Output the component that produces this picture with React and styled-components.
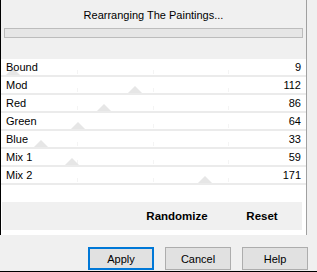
import React from 'react';
import styled, { createGlobalStyle } from 'styled-components';

const GlobalStyle = createGlobalStyle`
  html, body {
    margin: 0;
    padding: 0;
    background: #f0f0f0;
  }
  body {
    font-family: "Liberation Sans", Arial, sans-serif;
    font-size: 11px;
    color: #000;
  }
`;

const Window = styled.div`
  width: 317px;
  height: 272px;
  box-sizing: border-box;
  display: flex;
  flex-direction: column;
  background: #f0f0f0;
  border-bottom: 1px solid #000;
`;

const Panel = styled.div`
  width: 307px;
  height: 235px;
  flex: none;
  box-sizing: border-box;
  border-left: 1px solid #000;
  border-right: 1px solid #a0a0a0;
  background: #fff;
  display: flex;
  flex-direction: column;
`;

const Header = styled.div`
  height: 59px;
  box-sizing: border-box;
  padding: 8px 3px 0 3px;
  background: #f0f0f0;
  display: flex;
  flex-direction: column;
`;

const Title = styled.div`
  height: 14px;
  line-height: 14px;
  text-align: center;
  font-size: 11px;
`;

const Progress = styled.div`
  margin-top: 6px;
  height: 10px;
  box-sizing: border-box;
  border: 1px solid #bcbcbc;
  background: #e6e6e6;
`;

const Rows = styled.div`
  display: flex;
  flex-direction: column;
`;

const Row = styled.div`
  position: relative;
  height: 18px;
  box-sizing: border-box;
  border-bottom: 2px solid #ebebeb;
  padding: 0 5px 0 5px;
  display: flex;
  align-items: center;
  justify-content: space-between;
  background: #fff;
`;

const Label = styled.span`
  position: relative;
  z-index: 1;
  line-height: 14px;
`;

const Value = styled(Label)`
  text-align: right;
`;

// slider thumb, placed along the track from the value
const Thumb = styled.div`
  position: absolute;
  bottom: 0;
  width: 0;
  height: 0;
  border-left: 7px solid transparent;
  border-right: 7px solid transparent;
  border-bottom: 7px solid #e6e6e6;
`;

const Tick = styled.div`
  position: absolute;
  bottom: 1px;
  width: 1px;
  height: 4px;
  background: #f4f4f4;
`;

const Spacer = styled.div`
  height: 17px;
`;

const ActionBar = styled.div`
  height: 28px;
  margin: 0 4px 0 1px;
  background: #f0f0f0;
  display: flex;
  justify-content: flex-end;
  align-items: center;
  gap: 5px;
`;

const ActionButton = styled.div`
  width: 80px;
  text-align: center;
  font-weight: bold;
  font-size: 11.5px;
`;

const Footer = styled.div`
  flex: 1;
  display: flex;
  justify-content: flex-end;
  align-items: flex-start;
  gap: 11px;
  padding: 12px 9px 0 0;
`;

const Button = styled.div`
  width: 66px;
  height: 23px;
  box-sizing: border-box;
  display: flex;
  align-items: center;
  justify-content: center;
  background: #e1e1e1;
  border: 1px solid ${(p) => (p.primary ? '#0078d7' : '#adadad')};
  box-shadow: ${(p) => (p.primary ? 'inset 0 0 0 1px #0078d7' : 'none')};
  font-size: 11px;
`;

const params = [
  { name: 'Bound', value: 9 },
  { name: 'Mod', value: 112 },
  { name: 'Red', value: 86 },
  { name: 'Green', value: 64 },
  { name: 'Blue', value: 33 },
  { name: 'Mix 1', value: 59 },
  { name: 'Mix 2', value: 171 },
];

const ticks = [76, 152, 227];

export default function App() {
  return (
    <>
      <GlobalStyle />
      <Window>
        <Panel>
          <Header>
            <Title>Rearranging The Paintings...</Title>
            <Progress />
          </Header>
          <Rows>
            {params.map((p) => (
              <Row key={p.name}>
                {ticks.map((t) => (
                  <Tick key={t} style={{ left: t }} />
                ))}
                <Thumb style={{ left: Math.round(1 + p.value * 1.186 - 7) }} />
                <Label>{p.name}</Label>
                <Value>{p.value}</Value>
              </Row>
            ))}
          </Rows>
          <Spacer />
          <ActionBar>
            <ActionButton>Randomize</ActionButton>
            <ActionButton>Reset</ActionButton>
          </ActionBar>
        </Panel>
        <Footer>
          <Button primary>Apply</Button>
          <Button>Cancel</Button>
          <Button>Help</Button>
        </Footer>
      </Window>
    </>
  );
}
